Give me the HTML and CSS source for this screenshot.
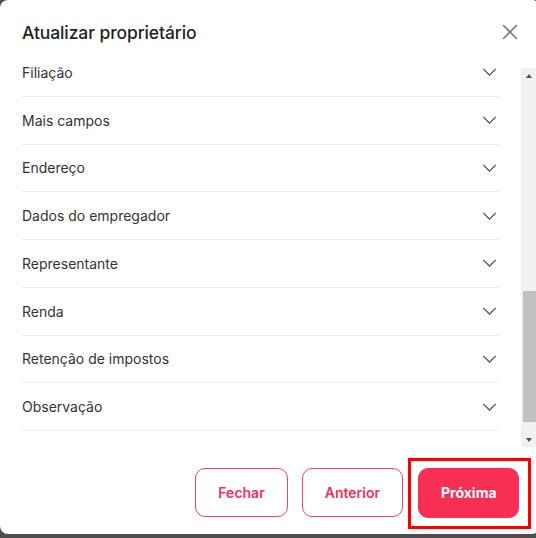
FILE: index.html
```html
<!DOCTYPE html>
<html lang="pt">
<head>
<meta charset="utf-8">
<link rel="stylesheet" href="styles.css">
</head>
<body>
<div class="dialog">
  <div class="header">
    <h1 class="title">Atualizar proprietário</h1>
    <button class="close" aria-label="Fechar">
      <svg width="16" height="16" viewBox="0 0 16 16"><path d="M1.5 1.5 L14.5 14.5 M14.5 1.5 L1.5 14.5" stroke="#7a7a7a" stroke-width="1.6" fill="none" stroke-linecap="round"/></svg>
    </button>
  </div>
  <div class="body">
    <div class="list">
      <div class="list-inner">
        <div class="row"><span>Filiação</span><svg class="chev" viewBox="0 0 16 9"><path d="M1 1 L8 8 L15 1" /></svg></div>
        <div class="row"><span>Mais campos</span><svg class="chev" viewBox="0 0 16 9"><path d="M1 1 L8 8 L15 1" /></svg></div>
        <div class="row"><span>Endereço</span><svg class="chev" viewBox="0 0 16 9"><path d="M1 1 L8 8 L15 1" /></svg></div>
        <div class="row"><span>Dados do empregador</span><svg class="chev" viewBox="0 0 16 9"><path d="M1 1 L8 8 L15 1" /></svg></div>
        <div class="row"><span>Representante</span><svg class="chev" viewBox="0 0 16 9"><path d="M1 1 L8 8 L15 1" /></svg></div>
        <div class="row"><span>Renda</span><svg class="chev" viewBox="0 0 16 9"><path d="M1 1 L8 8 L15 1" /></svg></div>
        <div class="row"><span>Retenção de impostos</span><svg class="chev" viewBox="0 0 16 9"><path d="M1 1 L8 8 L15 1" /></svg></div>
        <div class="row"><span>Observação</span><svg class="chev" viewBox="0 0 16 9"><path d="M1 1 L8 8 L15 1" /></svg></div>
      </div>
    </div>
    <div class="scrollbar">
      <div class="arrow up"></div>
      <div class="track"><div class="thumb"></div></div>
      <div class="arrow down"></div>
    </div>
  </div>
  <div class="footer">
    <button class="btn outline">Fechar</button>
    <button class="btn outline">Anterior</button>
    <button class="btn primary">Próxima</button>
  </div>
  <div class="highlight"></div>
</div>
</body>
</html>
```
FILE: styles.css
```css
* { box-sizing: border-box; }
html, body { margin: 0; padding: 0; }
body {
  background: #4d4d4d;
  width: 536px;
  height: 538px;
  overflow: hidden;
  font-family: Inter, "Noto Sans", sans-serif;
}
.dialog {
  position: relative;
  width: 540px;
  height: 534px;
  background: #fff;
  border-radius: 8px;
  display: flex;
  flex-direction: column;
}
.header {
  height: 55px;
  display: flex;
  align-items: flex-start;
  justify-content: space-between;
  padding: 21px 0 0 22px;
  flex: none;
}
.title {
  margin: 0;
  font-size: 17.5px;
  font-weight: 500;
  color: #1f1f1f;
  line-height: 24px;
  letter-spacing: -0.1px;
}
.close {
  border: 0;
  background: none;
  padding: 0;
  margin: 3px 22px 0 0;
  width: 16px;
  height: 16px;
  display: flex;
}
.body {
  display: flex;
  height: 392px;
  flex: none;
}
.list {
  flex: 1;
  overflow: hidden;
  padding-left: 22px;
  padding-right: 22px;
}
.list-inner { margin-top: -6px; }
.row {
  height: 47.75px;
  display: flex;
  align-items: center;
  justify-content: space-between;
  border-bottom: 1px solid #ececec;
  font-size: 14px;
  color: #333;
  padding-right: 2px;
}
.chev {
  width: 15px;
  height: 8px;
  fill: none;
  stroke: #4a4a4a;
  stroke-width: 1.4;
}
.scrollbar {
  width: 15px;
  margin-top: 13px;
  margin-right: 4px;
  background: #f1f1f1;
  display: flex;
  flex-direction: column;
}
.arrow {
  height: 15px;
  display: flex;
  align-items: center;
  justify-content: center;
  flex: none;
}
.arrow::before {
  content: "";
  border-left: 3.5px solid transparent;
  border-right: 3.5px solid transparent;
}
.arrow.up::before { border-bottom: 4px solid #505050; }
.arrow.down::before { border-top: 4px solid #505050; }
.track {
  flex: 1;
  padding-top: 208px;
  padding-left: 2px;
}
.thumb {
  height: 131px;
  background: #c1c1c1;
}
.footer {
  flex: 1;
  display: flex;
  justify-content: flex-end;
  align-items: center;
  gap: 14px;
  padding: 4px 21px 0 0;
}
.btn {
  font-family: Inter, "Noto Sans", sans-serif;
  font-size: 14px;
  font-weight: 600;
  height: 49px;
  padding: 0 22px;
  border-radius: 10px;
  cursor: pointer;
}
.outline {
  background: #fff;
  border: 1px solid #f3436a;
  color: #f0315a;
}
.primary {
  margin-left: 1px;
  height: 50px;
  background: #f72f55;
  border: 1px solid #f72f55;
  color: #fff;
  font-weight: 700;
  width: 101px;
}
.highlight {
  position: absolute;
  left: 408px;
  top: 458px;
  width: 123px;
  height: 71px;
  border: 3px solid #ff0000;
  pointer-events: none;
}
```
